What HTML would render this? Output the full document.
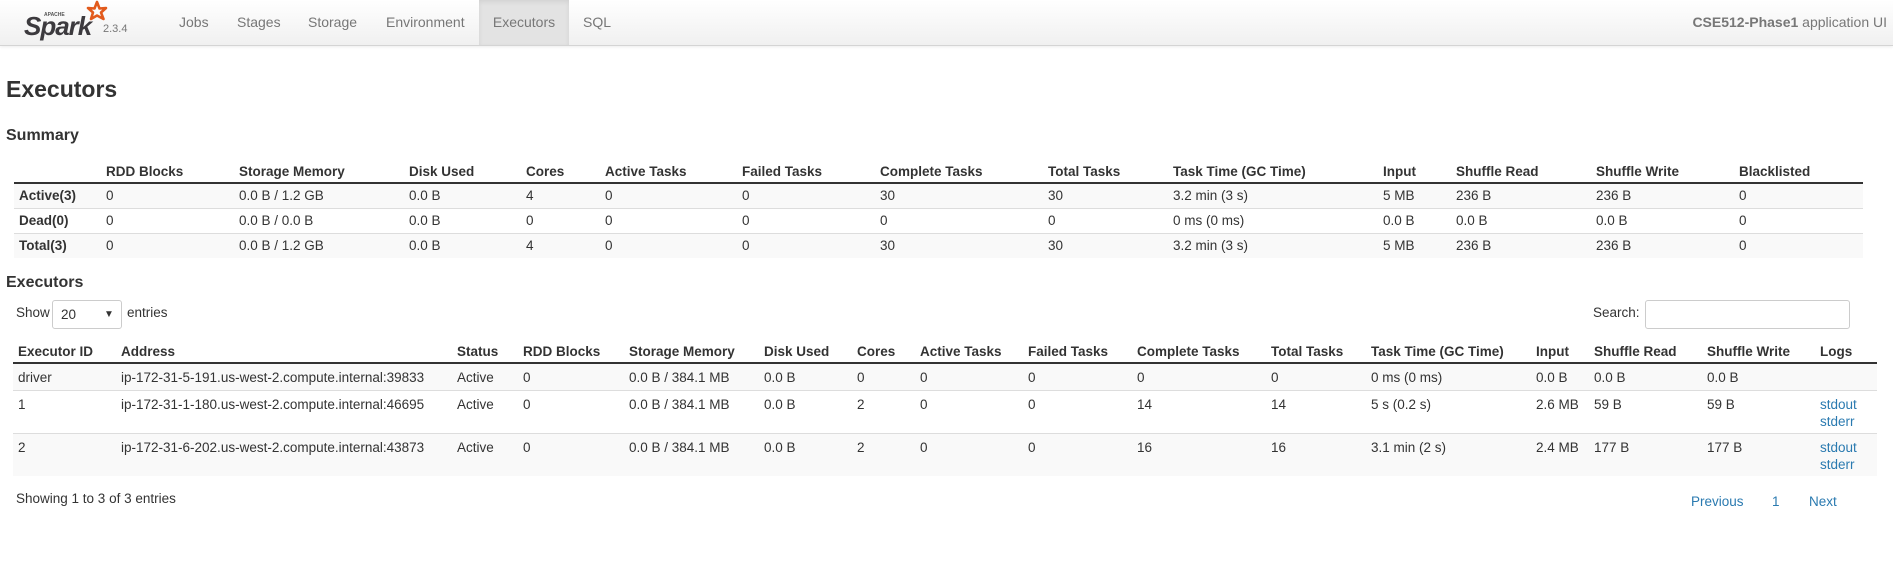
<!DOCTYPE html>
<html><head><meta charset="utf-8"><style>
*{box-sizing:border-box;margin:0;padding:0}
body{width:1893px;height:569px;overflow:hidden;background:#fff;font-family:"Liberation Sans",Arial,sans-serif;font-size:14px;color:#333;position:relative}
.nav{position:absolute;left:0;top:0;width:1893px;height:46px;background:linear-gradient(#fff,#f0f0f0);border-bottom:1px solid #d4d4d4;box-shadow:0 1px 3px rgba(0,0,0,.08)}
.nav a{position:absolute;top:0;height:45px;line-height:44px;color:#777;font-size:14px;text-decoration:none}
.nav .act{background:#e3e3e3;box-shadow:inset 0 2px 5px rgba(0,0,0,.08)}
.abs{position:absolute}
h3{position:absolute;left:6px;top:75px;font-size:23px;font-weight:bold;line-height:28px}
h4{position:absolute;left:6px;font-size:16px;font-weight:bold;line-height:20px}
table{position:absolute;border-collapse:collapse;table-layout:fixed;font-size:13.5px}
th{text-align:left;font-weight:bold;padding:0 5px;border-bottom:2px solid #333;height:23px;vertical-align:middle}
td{padding:0 5px;border-top:1px solid #ddd;vertical-align:middle;white-space:nowrap}
.s td{height:25px}
.g td{background:#f9f9f9}
.e td{vertical-align:top;line-height:17px;padding-top:5px}
a.l{color:#2a7ab0;text-decoration:none}
</style></head><body>
<div class="nav">
  <svg class="abs" style="left:22px;top:0px" width="86" height="42" viewBox="0 0 86 42">
    <path d="M79 2 L81.5 8.5 L88 8 L83 12.5 L85.5 19 L79 15.5 L73 19 L75 12.5 L70 8 L76.5 8.5 Z" fill="none" stroke="#e25a1c" stroke-width="2.6" stroke-linejoin="round" transform="translate(-4,0)"/>
    <text x="22" y="16" font-size="5" fill="#555" font-family="Liberation Sans" font-weight="bold">APACHE</text>
    <text x="2" y="35" font-size="26" font-style="italic" font-weight="bold" fill="#3c3a3e" font-family="Liberation Sans" letter-spacing="-1">Spark</text>
  </svg>
  <span class="abs" style="left:103px;top:23px;font-size:11px;color:#777">2.3.4</span>
  <a style="left:179px">Jobs</a>
  <a style="left:237px">Stages</a>
  <a style="left:308px">Storage</a>
  <a style="left:386px">Environment</a>
  <a class="act" style="left:479px;width:90px;text-align:center">Executors</a>
  <a style="left:583px">SQL</a>
  <span class="abs" style="right:6px;top:0;line-height:44px;color:#777;font-size:14px"><b>CSE512-Phase1</b> application UI</span>
</div>
<h3>Executors</h3>
<h4 style="top:126px">Summary</h4>
<table class="s" style="left:14px;top:160px;width:1849px">
<colgroup><col style="width:87px"><col style="width:133px"><col style="width:170px"><col style="width:117px"><col style="width:79px"><col style="width:137px"><col style="width:138px"><col style="width:168px"><col style="width:125px"><col style="width:210px"><col style="width:73px"><col style="width:140px"><col style="width:143px"><col style="width:129px"></colgroup>
<tr><th></th><th>RDD Blocks</th><th>Storage Memory</th><th>Disk Used</th><th>Cores</th><th>Active Tasks</th><th>Failed Tasks</th><th>Complete Tasks</th><th>Total Tasks</th><th>Task Time (GC Time)</th><th>Input</th><th>Shuffle Read</th><th>Shuffle Write</th><th>Blacklisted</th></tr>
<tr class="g"><td><b>Active(3)</b></td><td>0</td><td>0.0 B / 1.2 GB</td><td>0.0 B</td><td>4</td><td>0</td><td>0</td><td>30</td><td>30</td><td>3.2 min (3 s)</td><td>5 MB</td><td>236 B</td><td>236 B</td><td>0</td></tr>
<tr><td><b>Dead(0)</b></td><td>0</td><td>0.0 B / 0.0 B</td><td>0.0 B</td><td>0</td><td>0</td><td>0</td><td>0</td><td>0</td><td>0 ms (0 ms)</td><td>0.0 B</td><td>0.0 B</td><td>0.0 B</td><td>0</td></tr>
<tr class="g"><td><b>Total(3)</b></td><td>0</td><td>0.0 B / 1.2 GB</td><td>0.0 B</td><td>4</td><td>0</td><td>0</td><td>30</td><td>30</td><td>3.2 min (3 s)</td><td>5 MB</td><td>236 B</td><td>236 B</td><td>0</td></tr>
</table>
<h4 style="top:273px">Executors</h4>
<span class="abs" style="left:16px;top:305px;font-size:13.5px">Show</span>
<div class="abs" style="left:52px;top:300px;width:70px;height:29px;border:1px solid #ccc;border-radius:3px;font-size:13.5px;line-height:27px;padding-left:8px">20<span class="abs" style="left:51px;top:0;font-size:10px">&#9660;</span></div>
<span class="abs" style="left:127px;top:305px;font-size:13.5px">entries</span>
<span class="abs" style="left:1593px;top:305px;font-size:13.5px">Search:</span>
<div class="abs" style="left:1645px;top:300px;width:205px;height:29px;border:1px solid #ccc;border-radius:3px"></div>
<table class="e" style="left:13px;top:340px;width:1864px">
<colgroup><col style="width:103px"><col style="width:336px"><col style="width:66px"><col style="width:106px"><col style="width:135px"><col style="width:93px"><col style="width:63px"><col style="width:108px"><col style="width:109px"><col style="width:134px"><col style="width:100px"><col style="width:165px"><col style="width:58px"><col style="width:113px"><col style="width:113px"><col style="width:62px"></colgroup>
<tr><th>Executor ID</th><th>Address</th><th>Status</th><th>RDD Blocks</th><th>Storage Memory</th><th>Disk Used</th><th>Cores</th><th>Active Tasks</th><th>Failed Tasks</th><th>Complete Tasks</th><th>Total Tasks</th><th>Task Time (GC Time)</th><th>Input</th><th>Shuffle Read</th><th>Shuffle Write</th><th>Logs</th></tr>
<tr class="g" style="height:27px"><td>driver</td><td>ip-172-31-5-191.us-west-2.compute.internal:39833</td><td>Active</td><td>0</td><td>0.0 B / 384.1 MB</td><td>0.0 B</td><td>0</td><td>0</td><td>0</td><td>0</td><td>0</td><td>0 ms (0 ms)</td><td>0.0 B</td><td>0.0 B</td><td>0.0 B</td><td></td></tr>
<tr style="height:43px"><td>1</td><td>ip-172-31-1-180.us-west-2.compute.internal:46695</td><td>Active</td><td>0</td><td>0.0 B / 384.1 MB</td><td>0.0 B</td><td>2</td><td>0</td><td>0</td><td>14</td><td>14</td><td>5 s (0.2 s)</td><td>2.6 MB</td><td>59 B</td><td>59 B</td><td><a class="l">stdout</a><br><a class="l">stderr</a></td></tr>
<tr class="g" style="height:43px"><td>2</td><td>ip-172-31-6-202.us-west-2.compute.internal:43873</td><td>Active</td><td>0</td><td>0.0 B / 384.1 MB</td><td>0.0 B</td><td>2</td><td>0</td><td>0</td><td>16</td><td>16</td><td>3.1 min (2 s)</td><td>2.4 MB</td><td>177 B</td><td>177 B</td><td><a class="l">stdout</a><br><a class="l">stderr</a></td></tr>
</table>
<span class="abs" style="left:16px;top:491px;font-size:13.5px">Showing 1 to 3 of 3 entries</span>
<a class="l abs" style="left:1691px;top:494px;font-size:13.5px">Previous</a>
<a class="l abs" style="left:1772px;top:494px;font-size:13.5px">1</a>
<a class="l abs" style="left:1809px;top:494px;font-size:13.5px">Next</a>
</body></html>
